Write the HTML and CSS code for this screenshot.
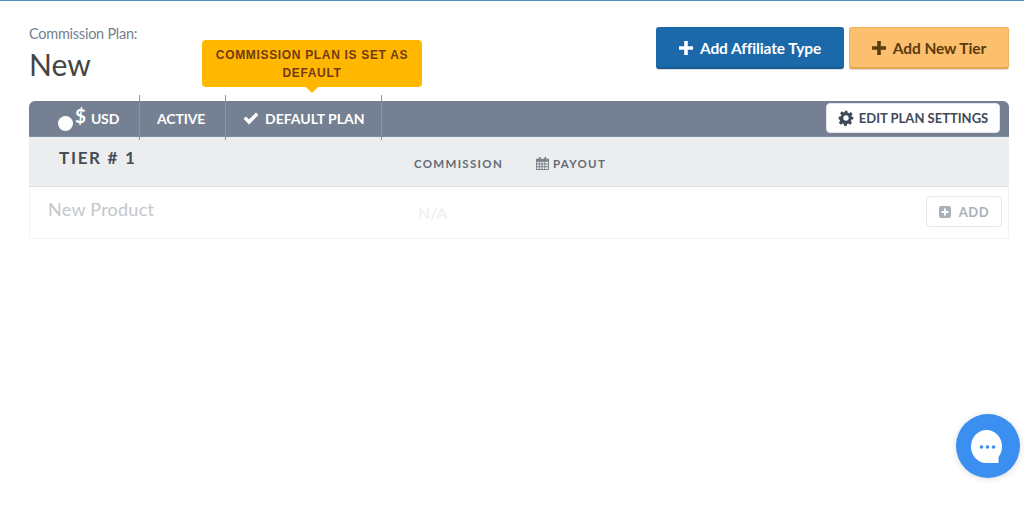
FILE: index.html
```html
<!DOCTYPE html>
<html lang="en">
<head>
<meta charset="utf-8">
<title>Commission Plan</title>
<link rel="stylesheet" href="styles.css">
</head>
<body>
<main class="page">
  <header class="top">
    <div class="title-block">
      <div class="eyebrow">Commission Plan:</div>
      <h1 class="plan-name">New</h1>
    </div>
    <div class="actions">
      <button class="btn btn-blue"><svg class="plus" viewBox="0 0 14 14"><path d="M5.200 0h3.600v5.200H14v3.600H8.800V14H5.200V8.800H0V5.200h5.200z"/></svg>Add Affiliate Type</button>
      <button class="btn btn-orange"><svg class="plus" viewBox="0 0 14 14"><path d="M5.200 0h3.600v5.200H14v3.600H8.800V14H5.200V8.800H0V5.200h5.200z"/></svg>Add New Tier</button>
    </div>
  </header>

  <section class="plan">
    <div class="bar">
      <div class="cell cell-usd"><span class="dot"></span><span class="dollar">$</span>USD</div>
      <div class="cell cell-active">ACTIVE</div>
      <div class="cell cell-default">
        <svg class="check" viewBox="0 0 16 13"><path d="M0.600 6.800 3 4.400l3 3L13 0.600l2.400 2.400L6 12.400z"/></svg>DEFAULT PLAN
        <div class="tooltip">COMMISSION PLAN IS SET AS DEFAULT</div>
      </div>
      <button class="edit"><svg class="gear" viewBox="0 0 24 24"><path fill-rule="evenodd" d="M10 1h4l.6 3.200 1.900.8 2.700-1.900 2.800 2.800-1.900 2.700.8 1.900L23 10v4l-3.100.6-.8 1.900 1.900 2.700-2.800 2.800-2.700-1.900-1.900.8-.5 3.100h-3.800l-.6-3.100-1.900-.8-2.700 1.900-2.800-2.800 1.900-2.700-.8-1.900L1 14v-4l3.200-.6.8-1.900-1.900-2.700 2.800-2.800 2.700 1.900 1.900-.8zM12 8a4 4 0 1 0 0 8 4 4 0 0 0 0-8z"/></svg>EDIT PLAN SETTINGS</button>
    </div>
    <div class="thead">
      <div class="tier">TIER # 1</div>
      <div class="th th-commission">COMMISSION</div>
      <div class="th th-payout"><svg class="cal" viewBox="0 0 14 14"><path fill-rule="evenodd" d="M3 0h2v2h4V0h2v2h3v12H0V2h3zM1 5v2h2V5zm3 0v2h2V5zm3 0v2h2V5zm3 0v2h3V5zM1 8v2h2V8zm3 0v2h2V8zm3 0v2h2V8zm3 0v2h3V8zM1 11v2h2v-2zm3 0v2h2v-2zm3 0v2h2v-2zm3 0v2h3v-2z"/></svg>PAYOUT</div>
    </div>
    <div class="row">
      <div class="product">New Product</div>
      <div class="na">N/A</div>
      <button class="add"><svg class="add-icon" viewBox="0 0 12 12"><path fill-rule="evenodd" d="M2 0h8a2 2 0 0 1 2 2v8a2 2 0 0 1-2 2H2a2 2 0 0 1-2-2V2a2 2 0 0 1 2-2zm3 2.500v2.500H2.500v2H5v2.500h2V7h2.500V5H7V2.500z"/></svg>ADD</button>
    </div>
  </section>
</main>

<div class="chat">
  <svg class="chat-icon" viewBox="0 0 31 33"><ellipse cx="15.500" cy="16.500" rx="15.500" ry="16.500" fill="#fff"/><path d="M15 22h12.500v11H15z" fill="#fff"/><circle cx="10.500" cy="17" r="1.800" fill="#3a8ff0"/><circle cx="16.500" cy="17" r="1.800" fill="#3a8ff0"/><circle cx="22.500" cy="17" r="1.800" fill="#3a8ff0"/></svg>
</div>
</body>
</html>
```

FILE: styles.css
```css
* { box-sizing: border-box; }
html, body { margin: 0; height: 100%; }
body {
  background: #fff;
  border-top: 1px solid #4b90c6;
  font-family: "Lato", "Liberation Sans", sans-serif;
  color: #444;
  overflow: hidden;
}
button { font-family: inherit; cursor: pointer; }
.page { padding: 0 15px 0 29px; }

.top {
  display: flex;
  justify-content: space-between;
  align-items: flex-start;
  height: 100px;
}
.title-block { padding-top: 24px; }
.eyebrow { font-size: 14.500px; line-height: 17px; color: #75818f; letter-spacing: -0.25px; padding-left: 0; }
.plan-name { margin: 4px 0 0 0; font-size: 30px; line-height: 36px; font-weight: 400; color: #444; }

.actions { display: flex; gap: 5px; padding-top: 26px; }
.btn {
  display: flex; align-items: center; justify-content: center;
  height: 42px; border-radius: 3px;
  font-size: 15.500px; font-weight: 700; letter-spacing: -0.1px;
  border: 1px solid transparent;
  padding: 0;
  box-shadow: 0 1px 1px rgba(0,0,0,.15);
}
.plus { width: 14px; height: 14px; margin-right: 7px; fill: currentColor; }
.btn-blue { width: 188px; background: #1c69aa; border-color: #1c69aa; border-bottom: 2px solid #185a92; color: #fff; }
.btn-orange { width: 160px; background: #fbbf6d; border-color: #f3b25c; border-bottom: 2px solid #e6a650; color: #5c3b0c; }

.bar {
  display: flex; align-items: center;
  height: 36px;
  background: #758192;
  border-radius: 6px 6px 0 0;
  color: #fff;
  font-size: 14px; font-weight: 700; letter-spacing: -0.15px;
  border-bottom: 1px solid #7e8da6;
}
.cell {
  position: relative;
  display: flex; align-items: center;
  height: 36px;
  margin-top: -1px;
}
.cell::after {
  content: ""; position: absolute; right: 0; top: -5px; bottom: -4px;
  width: 1px; background: #8494ae;
  z-index: 2;
}
.cell-usd { width: 111px; padding-left: 29px; }
.dot { width: 15px; height: 15px; border-radius: 50%; background: #fff; margin-top: 11px; }
.dollar { font-size: 19px; margin-right: 5px; margin-left: 2px; margin-top: -5px; font-weight: 700; }
.cell-active { width: 86px; padding-left: 17px; }
.cell-default { width: 156px; padding-left: 17px; letter-spacing: 0; }
.check { width: 16px; height: 13px; margin-right: 6px; fill: #fff; }

.tooltip {
  position: absolute; left: -24px; top: -60px;
  width: 220px; height: 47px;
  background: #ffb700;
  border-radius: 4px;
  color: #733a16;
  font-size: 12px; line-height: 18px; font-weight: 700; letter-spacing: 0.67px;
  text-align: center;
  padding: 6px 8px 0;
  font-family: "Liberation Sans", sans-serif;
}
.tooltip::after {
  content: ""; position: absolute; left: 104px; bottom: -6px;
  border: 6px solid transparent; border-bottom: 0; border-top-color: #ffb700;
}

.edit {
  margin-left: auto; margin-right: 9px; margin-top: -1px;
  display: flex; align-items: center; justify-content: center;
  width: 174px; height: 30px;
  background: #fff; border: 1px solid #e3e6ea; border-radius: 4px;
  color: #3f4a59; font-size: 13px; font-weight: 700; letter-spacing: 0;
  padding: 0;
}
.gear { width: 16px; height: 16px; margin-right: 5px; margin-top: -1px; fill: #3f4a59; }

.thead {
  position: relative;
  display: flex;
  height: 50px;
  background: #ecedef;
  border-bottom: 1px solid #dfe2e6;
  color: #5f6872;
}
.tier { width: 385px; padding: 11px 0 0 30px; font-size: 17px; line-height: 20px; font-weight: 700; letter-spacing: 1.7px; color: #454d56; }
.th { font-size: 11.500px; font-weight: 700; letter-spacing: 1.3px; padding-top: 20px; line-height: 14px; color: #636b74; }
.th-commission { width: 122px; }
.th-payout { display: flex; align-items: flex-start; }
.cal { width: 13px; height: 13px; margin: 0 4px 0 0; fill: #7a828b; }

.row {
  position: relative;
  display: flex;
  height: 52px;
  border: 1px solid #f2f3f4;
  border-top: 0;
  padding-left: 18px;
}
.product { width: 370px; padding-top: 11px; font-size: 18px; line-height: 22px; color: #c4c6c9; letter-spacing: 0.25px; }
.na { padding-top: 16px; font-size: 16px; line-height: 20px; color: #eeeff0; }
.add {
  margin-left: auto; margin-right: 6px; margin-top: 9px;
  display: flex; align-items: center; justify-content: center;
  width: 76px; height: 31px;
  background: #fff; border: 1px solid #e5e7e9; border-radius: 4px;
  color: #a9b0b8; font-size: 13px; font-weight: 700; letter-spacing: 0.5px;
  padding: 0;
}
.add-icon { width: 12px; height: 12px; margin-right: 8px; fill: #a9b0b8; }

.chat {
  position: fixed; left: 956px; top: 414px;
  width: 64px; height: 64px; border-radius: 50%;
  background: #3a8ff0;
  box-shadow: 0 1px 6px rgba(0,0,0,.15);
  display: flex; align-items: center; justify-content: center;
}
.chat-icon { width: 31px; height: 33px; margin-right: 3px; }
```
